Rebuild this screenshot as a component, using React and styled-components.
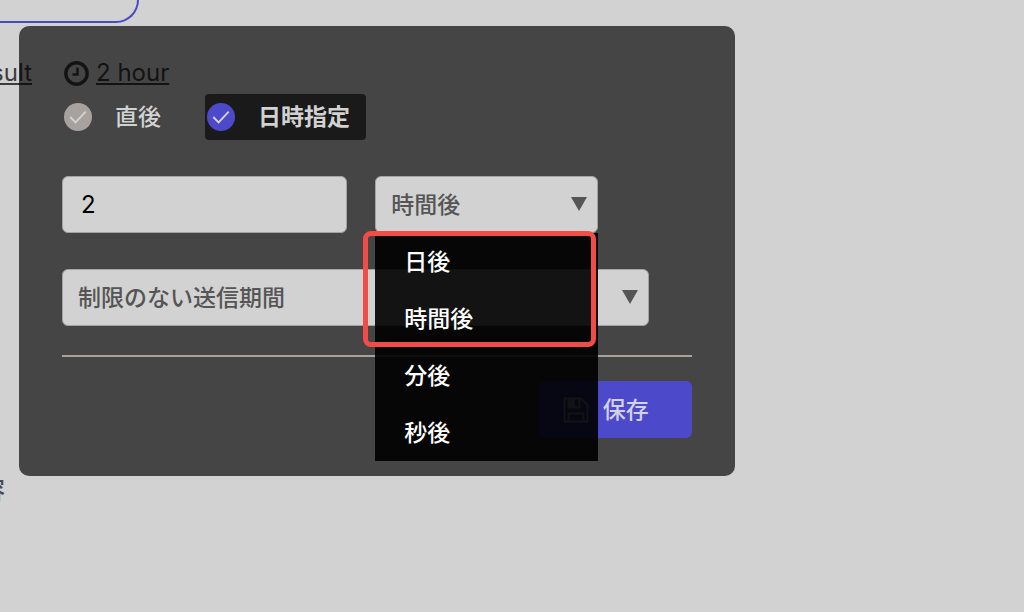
import React, { useState } from 'react';
import styled, { createGlobalStyle } from 'styled-components';

const GlobalStyle = createGlobalStyle`
    * {
        box-sizing: border-box;
    }

    body {
        margin: 0;
        background: #d2d2d2;
        font-family: Inter, "Noto Sans CJK JP", sans-serif;
        font-size: 23px;
        line-height: 32px;
        color: #3c3c3c;
    }

    button, input, select {
        font: inherit;
    }
`;

const Page = styled.div`
    position: relative;
    min-height: 100vh;
    overflow: hidden;
`;

const Card = styled.div`
    width: 139px;
    height: 23px;
    border: solid #4c49c4;
    border-width: 0 2px 2px 0;
    border-bottom-right-radius: 26px;
`;

const Links = styled.div`
    display: flex;
    align-items: center;
    gap: 32px;
    margin-top: 34px;
    font-size: 24px;
`;

const Cut = styled.div`
    display: flex;
    justify-content: flex-end;
    width: ${({ size }) => size};
    white-space: nowrap;
`;

const Link = styled.a`
    color: inherit;
    text-decoration: underline;
    text-decoration-thickness: 2px;
    text-underline-offset: 2px;
`;

const Delay = styled.div`
    display: flex;
    align-items: center;
    gap: 7px;
`;

const Caption = styled.div`
    margin-top: 385px;
    font-weight: 500;
    color: #4a4a4a;
`;

const Dialog = styled.form`
    position: absolute;
    top: 26px;
    left: 19px;
    width: 69.9%;
    padding: 68px 43px 38px;
    border-radius: 10px;
    background: rgba(0, 0, 0, 0.67);
`;

const Choices = styled.div`
    display: flex;
    gap: 28px;
`;

const Choice = styled.label`
    display: flex;
    align-items: center;
    gap: 23px;
    height: 46px;
    padding: 0 16px 0 2px;
    border-radius: 4px;
    color: #d2d2d2;
    font-weight: ${({ $active }) => $active ? 700 : 500};
    background: ${({ $active }) => $active ? '#1a1a1a' : 'transparent'};
    cursor: pointer;
`;

const Radio = styled.input`
    appearance: none;
    width: 28px;
    height: 28px;
    margin: 0;
    border-radius: 50%;
    background: #a8a29e;
    grid-area: 1 / 1;

    &:checked {
        background: #4d49cb;
    }
`;

const Mark = styled.span`
    display: grid;
    place-items: center;

    svg {
        grid-area: 1 / 1;
        pointer-events: none;
    }
`;

const Fields = styled.div`
    display: flex;
    gap: 28px;
    margin-top: 36px;
`;

const Amount = styled.input`
    width: 45.3%;
    height: 57px;
    padding: 0 18px;
    border: 1px solid #a8a29e;
    border-radius: 6px;
    background: #d2d2d2;
    color: #000;
    font-size: 24px;
`;

const SelectBox = styled.div`
    position: relative;
    width: ${({ size }) => size};
`;

const Select = styled.select`
    appearance: none;
    display: block;
    width: 100%;
    height: 57px;
    padding: 0 15px;
    border: 1px solid #a8a29e;
    border-radius: 6px;
    background: #d2d2d2;
    color: #555;
    font-weight: 500;
`;

const Arrow = styled.svg`
    position: absolute;
    top: 21px;
    right: 11px;
    pointer-events: none;
`;

const Menu = styled.div`
    position: absolute;
    z-index: 1;
    top: 100%;
    left: 0;
    right: 0;
    background: rgba(0, 0, 0, 0.91);
`;

const Option = styled.button`
    display: block;
    width: 100%;
    height: 57px;
    padding: 0 29px;
    border: 0;
    background: none;
    color: #fff;
    font-weight: 500;
    text-align: left;
    cursor: pointer;
`;

const Highlight = styled.div`
    position: absolute;
    z-index: 2;
    top: -2px;
    left: -12px;
    right: 2px;
    height: 116px;
    border: 5px solid #f24c48;
    border-radius: 8px;
    pointer-events: none;
`;

const Divider = styled.hr`
    height: 2px;
    margin: 29px 0 24px;
    border: 0;
    background: #a8a29e;
`;

const Actions = styled.div`
    display: flex;
    justify-content: flex-end;
`;

const Save = styled.button`
    display: flex;
    align-items: center;
    gap: 14px;
    height: 57px;
    padding: 0 43px 0 24px;
    border: 0;
    border-radius: 6px;
    background: #4d49cb;
    color: #d2d2e4;
    font-weight: 500;
`;

const Check = () => (
    <svg width="28" height="28" viewBox="0 0 29 29" fill="none" stroke="#d2d2d2" strokeWidth="2">
        <path d="M6.5 14.5 L12 20 L22.5 9" />
    </svg>
);

const Triangle = () => (
    <Arrow width="16" height="14" viewBox="0 0 16 14">
        <path d="M0 0 H16 L8 14 Z" fill="#555" />
    </Arrow>
);

const Clock = () => (
    <svg width="25" height="25" viewBox="0 0 25 25" fill="none" stroke="currentColor">
        <circle cx="12.5" cy="12.5" r="10.7" strokeWidth="3.4" />
        <path d="M13.5 6.5 V13.5 H8.5" strokeWidth="2.4" />
    </svg>
);

const Floppy = () => (
    <svg width="26" height="26" viewBox="0 0 26 26" fill="none" stroke="currentColor" strokeWidth="1.8">
        <path d="M1.5 1.5 H18 L24.5 8 V24.5 H1.5 Z" />
        <path d="M5.5 1.5 V10.5 H16.5 V1.5" />
        <path d="M5.5 24.5 V16.5 H20.5 V24.5" />
        <path d="M6 2 H11 V10 H6 Z" fill="currentColor" />
    </svg>
);

const units = ['日後', '時間後', '分後', '秒後'];

const App = () => {

    const [state, setState] = useState({ timing: 'date', amount: '2', unit: '時間後', open: true });

    const handleChange = e => {
        setState({ ...state, [e.target.name]: e.target.value });
    }

    const pickUnit = unit => {
        setState({ ...state, unit, open: false });
    }

    const openMenu = e => {
        e.preventDefault();
        setState({ ...state, open: !state.open });
    }

    return (
        <Page>
            <GlobalStyle />
            <Card />
            <Links>
                <Cut size="32px"><Link href="#result">Result</Link></Cut>
                <Delay>
                    <Clock />
                    <Link href="#delay">2 hour</Link>
                </Delay>
            </Links>
            <Caption><Cut size="5px">内容</Cut></Caption>

            <Dialog onSubmit={e => e.preventDefault()}>
                <Choices>
                    <Choice $active={state.timing === 'now'}>
                        <Mark>
                            <Radio type="radio" name="timing" value="now" checked={state.timing === 'now'} onChange={handleChange} />
                            <Check />
                        </Mark>
                        直後
                    </Choice>
                    <Choice $active={state.timing === 'date'}>
                        <Mark>
                            <Radio type="radio" name="timing" value="date" checked={state.timing === 'date'} onChange={handleChange} />
                            <Check />
                        </Mark>
                        日時指定
                    </Choice>
                </Choices>

                <Fields>
                    <Amount type="text" name="amount" aria-label="数" value={state.amount} onChange={handleChange} />
                    <SelectBox size="35.3%">
                        <Select name="unit" aria-label="単位" value={state.unit} onMouseDown={openMenu} onChange={handleChange}>
                            {units.map(unit => <option key={unit}>{unit}</option>)}
                        </Select>
                        <Triangle />
                        {
                            state.open &&
                            <Menu>
                                {units.map(unit => (
                                    <Option key={unit} type="button" onClick={() => pickUnit(unit)}>{unit}</Option>
                                ))}
                                <Highlight />
                            </Menu>
                        }
                    </SelectBox>
                </Fields>

                <Fields>
                    <SelectBox size="93.2%">
                        <Select name="period" aria-label="送信期間">
                            <option>制限のない送信期間</option>
                        </Select>
                        <Triangle />
                    </SelectBox>
                </Fields>

                <Divider />

                <Actions>
                    <Save type="submit"><Floppy />保存</Save>
                </Actions>
            </Dialog>
        </Page>
    );
};

export default App;
